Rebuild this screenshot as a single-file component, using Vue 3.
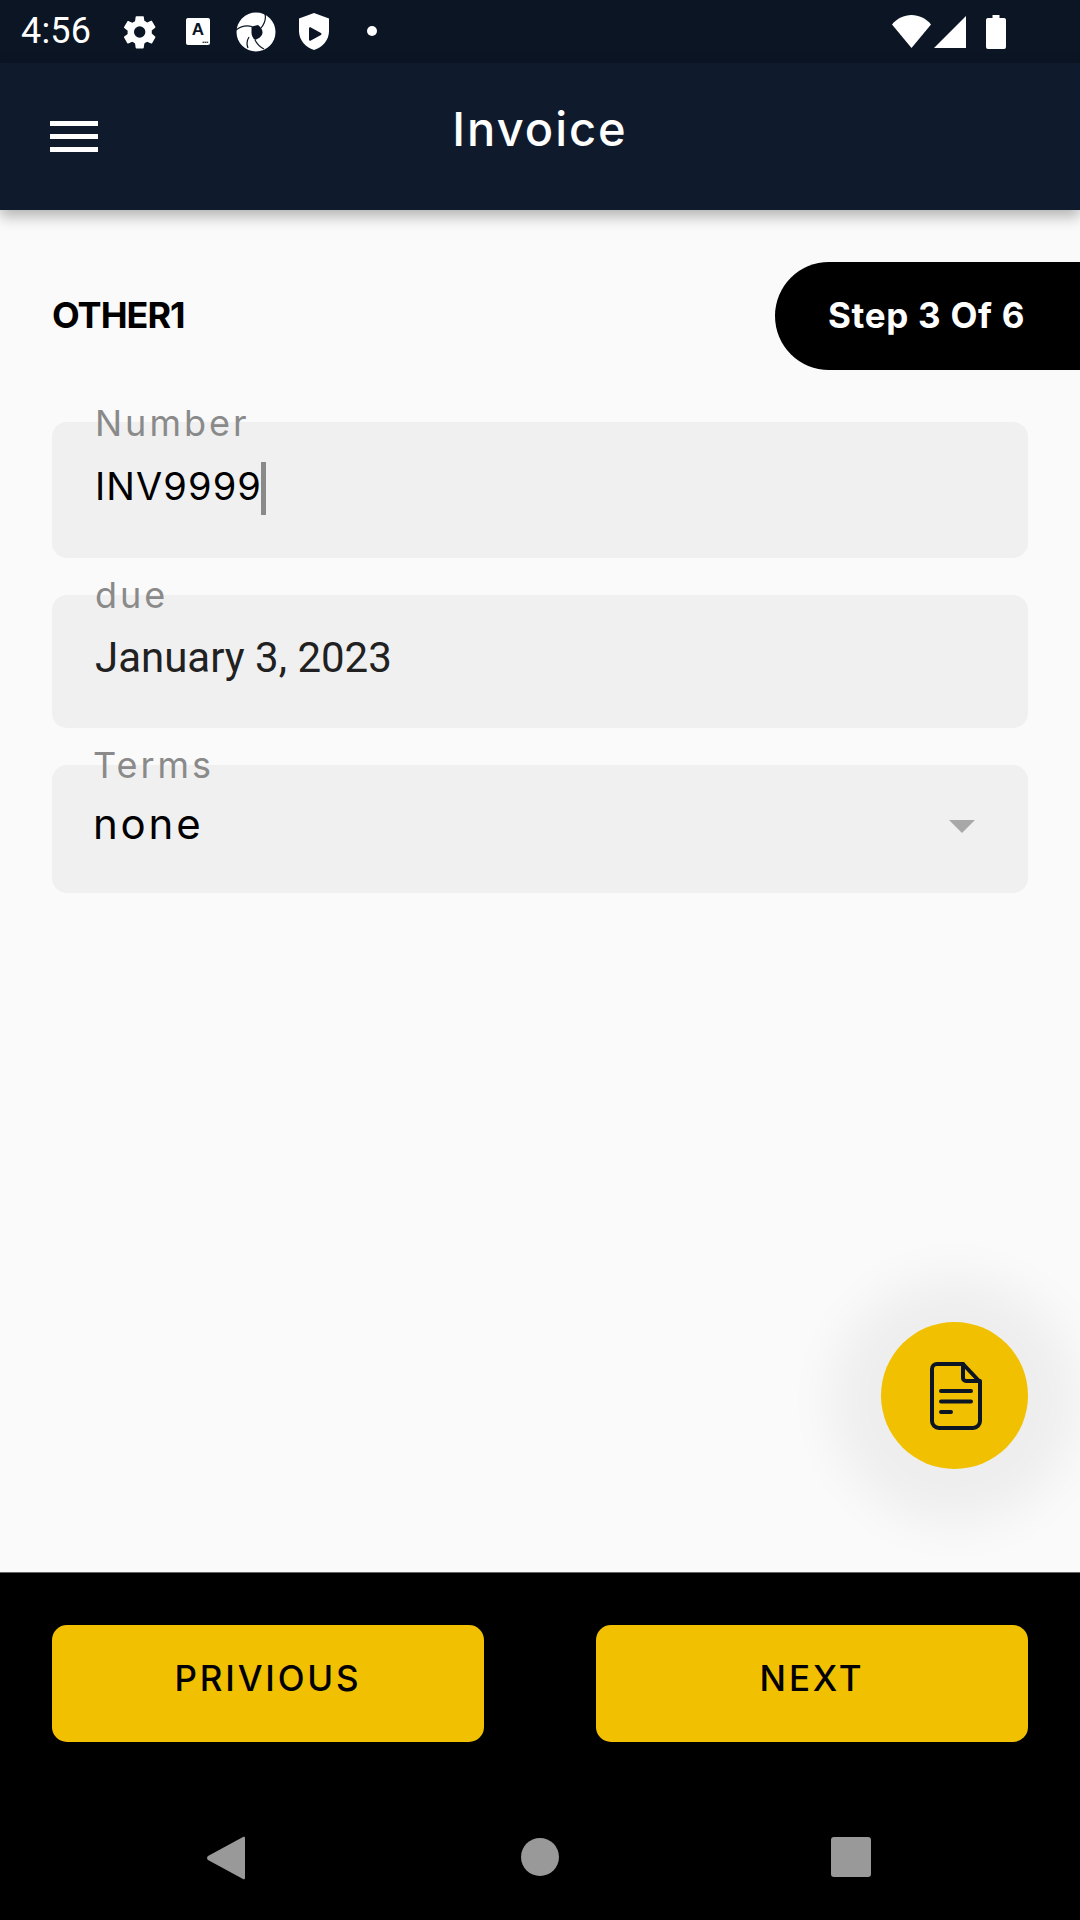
<script setup>
const fields = [
  { label: 'Number', value: 'INV9999', kind: 'number' },
  { label: 'due', value: 'January 3, 2023', kind: 'due' },
  { label: 'Terms', value: 'none', kind: 'terms' },
]
</script>

<template>
  <div class="page">
    <div class="status">
      <span class="time">4:56</span>
      <svg class="ic gear" viewBox="0 0 24 24"><path fill="#fff" d="M19.4 13c.04-.33.06-.66.06-1s-.02-.67-.07-1l2.17-1.65c.2-.15.25-.42.13-.64l-2.05-3.55c-.12-.22-.39-.3-.61-.22l-2.55 1.03c-.53-.4-1.1-.74-1.73-1l-.39-2.72A.5.5 0 0 0 13.86 2H9.76a.5.5 0 0 0-.5.43l-.39 2.72c-.62.26-1.2.6-1.73 1L4.6 5.12c-.23-.08-.5 0-.61.22L1.94 8.89c-.13.22-.07.49.12.64L4.23 11.2c-.05.33-.08.67-.08 1s.02.67.07 1l-2.16 1.65c-.2.15-.25.42-.13.64l2.05 3.55c.12.22.39.3.61.22l2.55-1.03c.53.4 1.1.74 1.73 1l.39 2.72c.04.24.25.43.5.43h4.1c.25 0 .46-.19.5-.43l.39-2.72c.62-.26 1.2-.6 1.73-1l2.55 1.03c.23.08.5 0 .61-.22l2.05-3.55c.12-.22.07-.49-.13-.64L19.4 13zM11.8 15.6a3.6 3.6 0 1 1 0-7.2 3.6 3.6 0 0 1 0 7.2z"/></svg>
      <span class="akey"><span class="akey-a">A</span><span class="akey-dots">...</span></span>
      <svg class="ic aperture" viewBox="0 0 40 40">
        <circle cx="20" cy="20" r="19.500" fill="#fff"/>
        <path fill="#0b1524" d="M15.500 14.500 22 13c3 2 4.500 5 4.500 7.500 0 3-3 6-7.500 7.500-2.500-2.500-3.500-5-3.500-7.500z"/>
        <path fill="none" stroke="#0b1524" stroke-width="1.200" d="M0 18c5-4 10-5 16-3.500M29 2c1 4 0 9-4 14M19 28c2 4 5 7 9 9M12 36c-2-5-1-8 1-11"/>
      </svg>
      <svg class="ic shield" viewBox="0 0 30 37"><path fill="#fff" d="M15 0 0 5.500V18c0 9 6.500 16.500 15 19 8.500-2.500 15-10 15-19V5.500z"/><path fill="#0b1524" d="M10 15.500c0-1 1-1.600 1.900-1.100l10 5.500c.8.500.8 1.700 0 2.200l-10 5.500c-.9.500-1.900-.1-1.900-1.100z"/></svg>
      <span class="dot"></span>
      <span class="status-right">
        <svg class="wifi" viewBox="0 0 39 33"><path fill="#fff" d="M0 9.500C5 3.500 12 0 19.500 0S34 3.500 39 9.500L19.500 33z"/></svg>
        <svg class="signal" viewBox="0 0 32 32"><path fill="#fff" d="M32 0v32H0z"/></svg>
        <svg class="battery" viewBox="0 0 20 34"><path fill="#fff" d="M6.500 0h7v3H18a2 2 0 0 1 2 2v27a2 2 0 0 1-2 2H2a2 2 0 0 1-2-2V5a2 2 0 0 1 2-2h4.500z"/></svg>
      </span>
    </div>

    <header class="appbar">
      <span class="burger"><i></i><i></i><i></i></span>
      <h1 class="title">Invoice</h1>
    </header>

    <main class="content">
      <div class="step-row">
        <span class="section">OTHER1</span>
        <span class="pill">Step 3 Of 6</span>
      </div>

      <div class="fields">
        <div v-for="f in fields" :key="f.label" class="field" :class="f.kind">
          <span class="label">{{ f.label }}</span>
          <span class="value">{{ f.value }}</span>
          <span v-if="f.kind === 'number'" class="caret"></span>
          <svg v-if="f.kind === 'terms'" class="arrow" viewBox="0 0 28 14"><path fill="#a8a8a8" d="M1 1h26L14 14z"/></svg>
        </div>
      </div>

      <button class="fab" type="button" aria-label="Invoice preview">
        <svg viewBox="0 0 52 68" width="52" height="68" fill="none" stroke="#0b1524" stroke-linecap="round" stroke-linejoin="round">
          <path stroke-width="4" d="M7 2h26l17 18v39a7 7 0 0 1-7 7H9a7 7 0 0 1-7-7V7a5 5 0 0 1 5-5z"/>
          <path stroke-width="4" d="M33 2v14a3 3 0 0 0 3 3h14"/>
          <path stroke-width="4" d="M11 29h30M11 39.500h30M11 50h10"/>
        </svg>
      </button>
    </main>

    <footer class="bottom">
      <div class="actions">
        <button class="btn" type="button">PRIVIOUS</button>
        <button class="btn" type="button">NEXT</button>
      </div>
      <nav class="nav">
        <svg class="nav-back" viewBox="0 0 38 44"><path fill="#999" d="M36 1c.9-.6 2-.1 2 1v40c0 1.100-1.100 1.600-2 1L1 24c-1.300-1-1.300-3 0-4z"/></svg>
        <span class="nav-home"></span>
        <span class="nav-recent"></span>
      </nav>
    </footer>
  </div>
</template>

<style scoped>
.page {
  width: 1080px;
  height: 1920px;
  display: flex;
  flex-direction: column;
  background: #fafafa;
  font-family: Inter, "Noto Sans", sans-serif;
  overflow: hidden;
}
.status {
  height: 63px;
  flex: none;
  background: #0b1524;
  display: flex;
  align-items: center;
  padding: 0 0 0 21px;
  color: #fff;
  box-sizing: border-box;
}
.time {
  font-family: Roboto, sans-serif;
  font-size: 36px;
  line-height: 63px;
  width: 100px;
  flex: none;
  letter-spacing: 0.2px;
}
.ic { display: block; flex: none; }
.gear { width: 38px; height: 38px; }
.akey {
  width: 24px;
  height: 27px;
  margin-left: 27px;
  background: #fff;
  border-radius: 2px;
  color: #0b1524;
  position: relative;
  flex: none;
  text-align: center;
}
.akey-a {
  display: block;
  font: 700 17px/18px "Liberation Sans", sans-serif;
  margin-top: 3px;
}
.akey-dots {
  position: absolute;
  right: 2px;
  bottom: 2px;
  font: 700 9px/6px "Liberation Sans", sans-serif;
  letter-spacing: -0.5px;
}
.aperture { width: 40px; height: 40px; margin-left: 26px; }
.shield { width: 30px; height: 37px; margin-left: 23px; }
.dot {
  width: 10px;
  height: 10px;
  border-radius: 50%;
  background: #fff;
  margin-left: 38px;
  flex: none;
  position: relative;
  top: -1px;
}
.status-right {
  margin-left: auto;
  display: flex;
  align-items: center;
  padding-right: 74px;
}
.wifi { width: 39px; height: 33px; display: block; }
.signal { width: 32px; height: 32px; margin-left: 3px; display: block; }
.battery { width: 20px; height: 34px; margin-left: 20px; display: block; }

.appbar {
  height: 147px;
  flex: none;
  background: #0f1b2d;
  box-shadow: 0 6px 14px rgba(0, 0, 0, 0.3);
  position: relative;
  z-index: 2;
  display: flex;
  justify-content: center;
  box-sizing: border-box;
  padding-top: 36px;
}
.burger {
  position: absolute;
  left: 50px;
  top: 58px;
  width: 48px;
  display: flex;
  flex-direction: column;
  gap: 8px;
}
.burger i { display: block; height: 5px; background: #fff; }
.title {
  margin: 0;
  font: 500 47px/60px Inter, sans-serif;
  color: #fff;
  letter-spacing: 2px;
}

.content {
  flex: 1;
  position: relative;
  padding-top: 52px;
  box-sizing: border-box;
}
.step-row {
  display: flex;
  align-items: center;
  justify-content: space-between;
  padding-left: 52px;
}
.section {
  font: 700 36px/40px Inter, sans-serif;
  color: #000;
  letter-spacing: -1px;
  margin-top: -2px;
}
.pill {
  width: 305px;
  height: 108px;
  background: #000;
  color: #fff;
  border-radius: 54px 0 0 54px;
  box-sizing: border-box;
  padding-left: 53px;
  font: 700 35px/106px Inter, sans-serif;
  letter-spacing: 0.7px;
}
.fields {
  margin: 52px 52px 0;
  display: flex;
  flex-direction: column;
  gap: 37px;
}
.field {
  position: relative;
  background: #f0f0f0;
  border-radius: 15px;
  height: 136px;
  box-sizing: border-box;
  padding: 40px 43px 0;
}
.field.due { height: 133px; padding-top: 39px; }
.field.terms { height: 128px; padding: 35px 41px 0; }
.label {
  position: absolute;
  left: 43px;
  top: -20px;
  font: 400 36px/42px Inter, sans-serif;
  letter-spacing: 3px;
  color: #8a8a8a;
}
.terms .label { left: 41px; top: -21px; }
.due .label { top: -21px; }
.value {
  display: block;
  font: 400 38px/48px Inter, sans-serif;
  color: #000;
  width: max-content;
  letter-spacing: 1.1px;
}
.due .value {
  font-family: Roboto, sans-serif;
  font-size: 42px;
  color: #212121;
  letter-spacing: 0;
}
.terms .value {
  font-size: 42px;
  letter-spacing: 2.8px;
}
.caret {
  position: absolute;
  left: 209px;
  top: 40px;
  width: 5px;
  height: 53px;
  background: #8a8a8a;
}
.arrow {
  position: absolute;
  right: 52px;
  top: 54px;
  width: 28px;
  height: 14px;
  display: block;
}
.fab {
  position: absolute;
  left: 881px;
  top: 1112px;
  width: 147px;
  height: 147px;
  padding: 0;
  border: 0;
  border-radius: 50%;
  background: #f1c000;
  box-shadow: 0 5px 50px 50px rgba(0, 0, 0, 0.05);
  display: flex;
  align-items: center;
  justify-content: center;
}
.fab svg { display: block; margin-left: 3px; }

.bottom {
  height: 348px;
  flex: none;
  background: #000;
  box-sizing: border-box;
  border-top: 1px solid #666;
  padding-top: 52px;
  display: flex;
  flex-direction: column;
}
.actions {
  display: flex;
  justify-content: space-between;
  padding: 0 52px;
}
.btn {
  width: 432px;
  height: 117px;
  border: 0;
  border-radius: 15px;
  background: #f1c000;
  color: #000;
  font: 500 35px/40px Inter, sans-serif;
  letter-spacing: 2.8px;
  padding: 0 0 12px;
}
.nav {
  flex: 1;
  position: relative;
}
.nav-back,
.nav-home,
.nav-recent {
  position: absolute;
  display: block;
}
.nav-back { left: 207px; top: 94px; width: 38px; height: 44px; }
.nav-home {
  left: 521px;
  top: 96px;
  width: 38px;
  height: 38px;
  border-radius: 50%;
  background: #999;
}
.nav-recent {
  left: 831px;
  top: 95px;
  width: 40px;
  height: 40px;
  border-radius: 3px;
  background: #999;
}
</style>
